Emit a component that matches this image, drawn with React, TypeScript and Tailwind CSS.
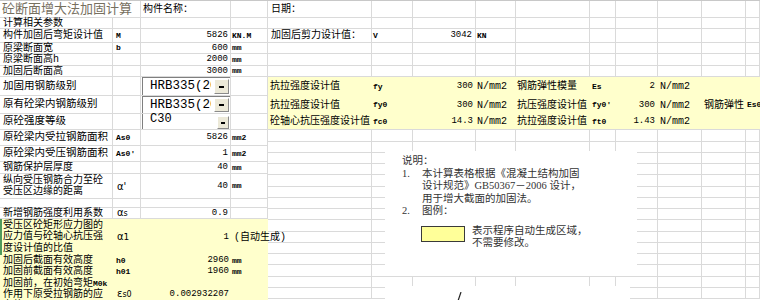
import React from "react"

type P = { className?: string; children?: React.ReactNode }

// gridline cell
function Cell({ className = "", children }: P) {
  return (
    <div className={`flex items-center whitespace-nowrap border-r border-b border-[#dadada] ${className}`}>
      {children}
    </div>
  )
}

// yellow "auto generated" cell, no gridlines
function Fill({ className = "", children }: P) {
  return <div className={`flex items-center whitespace-nowrap bg-[#ffffcc] ${className}`}>{children}</div>
}

function Blanks({ n }: { n: number }) {
  return (
    <>
      {Array.from({ length: n }).map((_, i) => (
        <Cell key={i} />
      ))}
    </>
  )
}

function Combo({ value }: { value: string }) {
  return (
    <div className="flex h-full w-full border-t border-l border-[#7f7f7f] bg-white">
      <div className="flex-1 overflow-hidden pl-[7px] pr-[3px] text-[12.5px] leading-[17px]">
        <div className="w-full overflow-hidden">{value}</div>
      </div>
      <div className="my-[1px] mr-[1px] flex w-[15px] items-center justify-center border border-t-white border-l-white border-r-[#8a8a8a] border-b-[#8a8a8a] bg-[#ece9d8]">
        <span className="block h-[2px] w-[5px] bg-black" />
      </div>
    </div>
  )
}

const sm = "text-[8px] leading-[10px] font-bold"
const num = "text-[9px]"
const unit = "text-[10px]"

export default function App() {
  return (
    <div className="h-[300px] w-[760px] overflow-hidden border-t border-[#c8c8c8] bg-white font-['Liberation_Mono','Noto_Sans_CJK_SC',monospace] text-[10px] leading-[11px] text-black">
      {/* rows 1-9 */}
      <div className="grid grid-cols-[113px_28px_90px_37px_104px_41px_63px_40px_74px_26px_42px_44px_44px_1fr] grid-rows-[17px_11px_14px_11px_12px_11px_19px_18px_16px]">
        <Cell className="col-span-2 pl-[2px] text-[13px] text-[#77705f]">砼断面增大法加固计算</Cell>
        <Cell className="pl-[2px]">构件名称：</Cell>
        <Cell />
        <Cell className="pl-[3px]">日期：</Cell>
        <Blanks n={9} />

        <Cell className="pl-[3px]">计算相关参数</Cell>
        <Blanks n={13} />

        <Cell className="pl-[3px]">构件加固后弯矩设计值</Cell>
        <Cell className={`pl-[3px] ${sm}`}>M</Cell>
        <Cell className={`justify-end pr-[2px] ${num}`}>5826</Cell>
        <Cell className={`pl-[1px] ${sm}`}>KN.M</Cell>
        <Cell className="pl-[3px]">加固后剪力设计值：</Cell>
        <Cell className={`pl-[1px] ${sm}`}>V</Cell>
        <Cell className={`justify-end pr-[3px] ${num}`}>3042</Cell>
        <Cell className={`pl-[1px] ${sm}`}>KN</Cell>
        <Blanks n={6} />

        <Cell className="pl-[3px]">原梁断面宽</Cell>
        <Cell className={`pl-[3px] ${sm}`}>b</Cell>
        <Cell className={`justify-end pr-[2px] ${num}`}>600</Cell>
        <Cell className={`pl-[1px] ${sm}`}>mm</Cell>
        <Blanks n={10} />

        <Cell className="pl-[3px]">原梁断面高h</Cell>
        <Cell />
        <Cell className={`justify-end pr-[2px] ${num}`}>2000</Cell>
        <Cell className={`pl-[1px] ${sm}`}>mm</Cell>
        <Blanks n={10} />

        <Cell className="pl-[3px]">加固后断面高</Cell>
        <Cell />
        <Cell className={`justify-end pr-[2px] ${num}`}>3000</Cell>
        <Cell className={`pl-[1px] ${sm}`}>mm</Cell>
        <Blanks n={10} />

        <Cell className="pl-[3px] text-[10.5px]">加固用钢筋级别</Cell>
        <Cell />
        <Cell className="items-stretch pl-[1px]">
          <Combo value="HRB335(20MnSi)" />
        </Cell>
        <Cell />
        {/* auto generated material values */}
        <div className="col-span-10 row-span-3 grid grid-cols-[104px_41px_63px_40px_74px_26px_42px_44px_44px_1fr] grid-rows-[19px_18px_15px] border-b border-[#dadada] bg-[#ffffcc]">
          <Fill className="pl-[2px]">抗拉强度设计值</Fill>
          <Fill className={`pl-[1px] ${sm}`}>fy</Fill>
          <Fill className={`justify-end pr-[3px] ${num}`}>300</Fill>
          <Fill className={`pl-[1px] ${unit}`}>N/mm2</Fill>
          <Fill className="pl-[1px]">钢筋弹性模量</Fill>
          <Fill className={`pl-[2px] ${sm}`}>Es</Fill>
          <Fill className={`justify-end pr-[3px] ${num}`}>2</Fill>
          <Fill className={`pl-[2px] ${unit}`}>N/mm2</Fill>
          <Fill />
          <Fill />

          <Fill className="pl-[2px]">抗拉强度设计值</Fill>
          <Fill className={`pl-[1px] ${sm}`}>fy0</Fill>
          <Fill className={`justify-end pr-[3px] ${num}`}>300</Fill>
          <Fill className={`pl-[1px] ${unit}`}>N/mm2</Fill>
          <Fill className="pl-[1px]">抗压强度设计值</Fill>
          <Fill className={`pl-[2px] ${sm}`}>fy0'</Fill>
          <Fill className={`justify-end pr-[3px] ${num}`}>300</Fill>
          <Fill className={`pl-[2px] ${unit}`}>N/mm2</Fill>
          <Fill className="overflow-hidden pl-[2px]">钢筋弹性</Fill>
          <Fill className={`pl-[1px] ${sm}`}>Es0</Fill>

          <Fill className="pl-[2px]">砼轴心抗压强度设计值</Fill>
          <Fill className={`pl-[1px] ${sm}`}>fc0</Fill>
          <Fill className={`justify-end pr-[3px] ${num}`}>14.3</Fill>
          <Fill className={`pl-[1px] ${unit}`}>N/mm2</Fill>
          <Fill className="pl-[1px]">抗拉强度设计值</Fill>
          <Fill className={`pl-[2px] ${sm}`}>ft0</Fill>
          <Fill className={`justify-end pr-[3px] ${num}`}>1.43</Fill>
          <Fill className={`pl-[2px] ${unit}`}>N/mm2</Fill>
          <Fill />
          <Fill />
        </div>

        <Cell className="pl-[3px] text-[10.5px]">原有砼梁内钢筋级别</Cell>
        <Cell />
        <Cell className="items-stretch pl-[1px]">
          <Combo value="HRB335(20MnSi)" />
        </Cell>
        <Cell />

        <Cell className="pl-[3px] text-[10.5px]">原砼强度等级</Cell>
        <Cell />
        <Cell className="items-stretch pl-[1px]">
          <div className="flex h-full w-full border-l border-[#7f7f7f] bg-white">
            <div className="flex-1 pl-[7px] text-[12px] leading-[11px]">C30</div>
            <div className="mt-[2px] mr-[1px] flex w-[12px] items-center justify-center border border-t-white border-l-white border-r-[#8a8a8a] border-b-[#8a8a8a] bg-[#ece9d8]">
              <span className="block h-[2px] w-[4px] bg-black" />
            </div>
          </div>
        </Cell>
        <Cell />
      </div>

      {/* rows 10 onward */}
      <div className="flex">
        <div className="grid w-[268px] shrink-0 grid-cols-[113px_28px_90px_37px] grid-rows-[16px_16px_12px_25px_9px_11px_36px_11px_11px_34px]">
          <Cell className="pl-[3px] text-[10.5px]">原砼梁内受拉钢筋面积</Cell>
          <Cell className={`pl-[3px] ${sm}`}>As0</Cell>
          <Cell className={`justify-end pr-[2px] ${num}`}>5826</Cell>
          <Cell className={`pl-[1px] ${sm}`}>mm2</Cell>

          <Cell className="pl-[3px] text-[10.5px]">原砼梁内受压钢筋面积</Cell>
          <Cell className={`pl-[3px] ${sm}`}>As0'</Cell>
          <Cell className={`justify-end pr-[2px] ${num}`}>1</Cell>
          <Cell className={`pl-[1px] ${sm}`}>mm2</Cell>

          <Cell className="pl-[3px]">钢筋保护层厚度</Cell>
          <Cell />
          <Cell className={`justify-end pr-[2px] ${num}`}>40</Cell>
          <Cell className={`pl-[1px] ${sm}`}>mm</Cell>

          <Cell className="pl-[3px]">
            <div>
              <div>纵向受压钢筋合力至砼</div>
              <div>受压区边缘的距离</div>
            </div>
          </Cell>
          <Cell className="pl-[4px] font-['DejaVu_Sans',sans-serif]">α'</Cell>
          <Cell className={`justify-end pr-[2px] ${num}`}>40</Cell>
          <Cell className={`pl-[1px] ${sm}`}>mm</Cell>

          <Blanks n={4} />

          <Cell className="pl-[3px]">新增钢筋强度利用系数</Cell>
          <Cell className="pl-[4px] font-['DejaVu_Sans',sans-serif]">
            <span>
              α<span className="text-[8px]">s</span>
            </span>
          </Cell>
          <Cell className={`justify-end pr-[2px] ${num}`}>0.9</Cell>
          <Cell />

          <Fill className="border-l-2 border-[#4f9a5c] pl-[1px] leading-[11.5px]">
            <div>
              <div>受压区砼矩形应力图的</div>
              <div>应力值与砼轴心抗压强</div>
              <div>度设计值的比值</div>
            </div>
          </Fill>
          <Fill className="pl-[4px] font-['DejaVu_Sans',sans-serif]">
            <span>
              α<span className="text-[9px]">1</span>
            </span>
          </Fill>
          <Fill className={`justify-end pr-[2px] ${num}`}>1</Fill>
          <Fill className="relative z-10 pl-[3px]">(自动生成)</Fill>

          <Fill className="pl-[3px]">加固后截面有效高度</Fill>
          <Fill className={`pl-[3px] ${sm}`}>h0</Fill>
          <Fill className={`justify-end pr-[2px] ${num}`}>2960</Fill>
          <Fill className={`pl-[1px] ${sm}`}>mm</Fill>

          <Fill className="pl-[3px]">加固前截面有效高度</Fill>
          <Fill className={`pl-[3px] ${sm}`}>h01</Fill>
          <Fill className={`justify-end pr-[2px] ${num}`}>1960</Fill>
          <Fill className={`pl-[1px] ${sm}`}>mm</Fill>

          <Fill className="pl-[3px]">
            <div>
              <div>
                加固前，在初始弯矩<span className="text-[8px] font-bold">M0k</span>
              </div>
              <div>作用下原受拉钢筋的应</div>
              <div>力值</div>
            </div>
          </Fill>
          <Fill className="pl-[4px] font-['DejaVu_Sans',sans-serif]">
            <span>
              ε<span className="text-[8px]">s0</span>
            </span>
          </Fill>
          <Fill className={`justify-end pr-[2px] ${num}`}>0.002932207</Fill>
          <Fill />
        </div>

        <div className="relative flex-1">
          <div className="grid grid-cols-[104px_41px_63px_40px_74px_26px_42px_44px_44px_1fr] grid-rows-[12px_11px_11px_11px_12px_11px_11px_11px_12px_11px_11px_11px_12px_11px_11px]">
            {Array.from({ length: 150 }).map((_, i) => (
              <div key={i} className="border-r border-b border-[#dadada]" />
            ))}
          </div>

          {/* explanation picture */}
          <div className="absolute left-[117px] top-[21px] h-[125px] w-[252px] bg-white pl-[17px] pt-[4px] font-['Liberation_Serif','Noto_Sans_CJK_SC',serif] text-[10.5px] leading-[12.5px] text-[#333]">
            <div>说明：</div>
            <div className="flex">
              <span className="w-[20px]">1.</span>
              <div>
                <div>本计算表格根据《混凝土结构加固</div>
                <div>设计规范》GB50367－2006 设计，</div>
                <div>用于增大截面的加固法。</div>
              </div>
            </div>
            <div className="flex">
              <span className="w-[20px]">2.</span>
              <span>图例：</span>
            </div>
            <div className="mt-[7px] flex pl-[19px]">
              <span className="mt-[1px] h-[16px] w-[44px] border border-[#3a3a3a] bg-[#ffff99]" />
              <div className="pl-[7px]">
                <div>表示程序自动生成区域，</div>
                <div>不需要修改。</div>
              </div>
            </div>
          </div>

          <div className="absolute left-[117px] top-[156px] h-[24px] w-[245px] bg-white">
            <svg className="absolute left-[70px] top-[6px]" width="8" height="12" viewBox="0 0 8 12">
              <path d="M6 0 L2 12" stroke="#222" strokeWidth="1.2" fill="none" />
            </svg>
          </div>
        </div>
      </div>
    </div>
  )
}
